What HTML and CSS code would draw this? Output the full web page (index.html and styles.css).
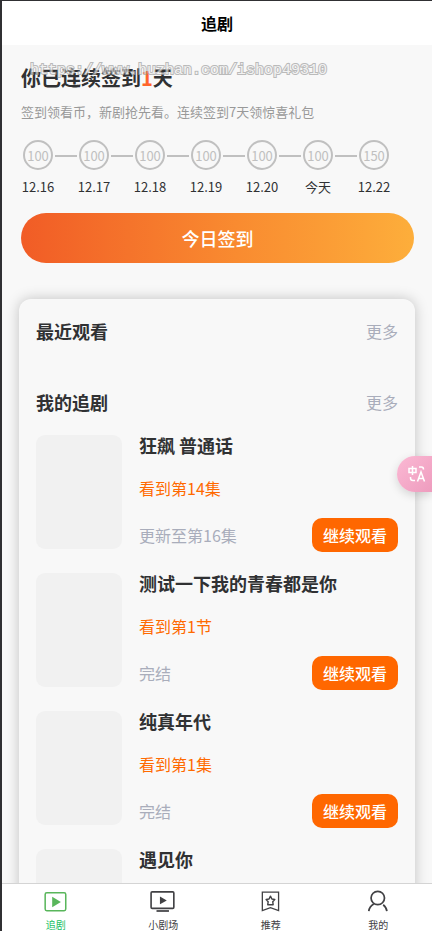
FILE: index.html
```html
<!DOCTYPE html>
<html lang="zh-CN">
<head>
<meta charset="utf-8">
<meta name="viewport" content="width=device-width, initial-scale=1">
<title>追剧</title>
<link rel="stylesheet" href="styles.css">
</head>
<body>
<div class="app">
  <header class="header"><h1 class="header-title">追剧</h1></header>
  <main class="content">
    <section class="checkin">
      <h2 class="checkin-title">你已连续签到<span class="count">1</span>天</h2>
      <div class="watermark">https://www.huzhan.com/ishop49310</div>
      <p class="checkin-hint">签到领看币，新剧抢先看。连续签到7天领惊喜礼包</p>
      <ol class="days">
        <li class="day"><span class="coin">100</span><span class="date">12.16</span></li>
        <li class="day"><span class="coin">100</span><span class="date">12.17</span></li>
        <li class="day"><span class="coin">100</span><span class="date">12.18</span></li>
        <li class="day"><span class="coin">100</span><span class="date">12.19</span></li>
        <li class="day"><span class="coin">100</span><span class="date">12.20</span></li>
        <li class="day"><span class="coin">100</span><span class="date">今天</span></li>
        <li class="day"><span class="coin">150</span><span class="date">12.22</span></li>
      </ol>
      <button class="checkin-button" type="button">今日签到</button>
    </section>
    <section class="card">
      <div class="section-head"><h2 class="section-title">最近观看</h2><a class="more" href="#recent">更多</a></div>
      <div class="section-head"><h2 class="section-title">我的追剧</h2><a class="more" href="#mine">更多</a></div>
      <ul class="shows">
        <li class="show">
          <div class="cover"></div>
          <div class="info">
            <h3 class="name">狂飙 普通话</h3>
            <p class="progress">看到第14集</p>
            <div class="row"><span class="status">更新至第16集</span><button class="resume" type="button">继续观看</button></div>
          </div>
        </li>
        <li class="show">
          <div class="cover"></div>
          <div class="info">
            <h3 class="name">测试一下我的青春都是你</h3>
            <p class="progress">看到第1节</p>
            <div class="row"><span class="status">完结</span><button class="resume" type="button">继续观看</button></div>
          </div>
        </li>
        <li class="show">
          <div class="cover"></div>
          <div class="info">
            <h3 class="name">纯真年代</h3>
            <p class="progress">看到第1集</p>
            <div class="row"><span class="status">完结</span><button class="resume" type="button">继续观看</button></div>
          </div>
        </li>
        <li class="show">
          <div class="cover"></div>
          <div class="info"><h3 class="name">遇见你</h3></div>
        </li>
      </ul>
    </section>
  </main>
  <nav class="tabs">
    <a class="tab active" href="#follow">
      <svg class="icon" viewBox="0 0 24 24" fill="none" stroke="currentColor"><rect x="2" y="3.500" width="19" height="16.500" rx="1.500" stroke-width="1.400"/><path d="M8.500 7.200v9.600l8-4.800z" fill="currentColor" stroke="none"/></svg>
      <span>追剧</span>
    </a>
    <a class="tab" href="#theater">
      <svg class="icon" viewBox="0 0 24 24" fill="none" stroke="currentColor"><rect x="1" y="2.700" width="21" height="15.200" rx="1" stroke-width="1.500"/><path d="M9.200 7v7l6.300-3.500z" fill="currentColor" stroke="none"/><path d="M6 20.300h11.500" stroke-width="1.600"/></svg>
      <span>小剧场</span>
    </a>
    <a class="tab" href="#recommend">
      <svg class="icon" viewBox="0 0 24 24" fill="none" stroke="currentColor"><path d="M4 2.800h15v17.200l-7.500-2.800L4 20z" stroke-width="1.200"/><path d="M11.500 6.600l1.300 2.600 2.700.5-1.900 2 .4 2.800H9l.4-2.800-1.900-2 2.700-.5z" stroke-width="1.300" stroke-linejoin="round"/></svg>
      <span>推荐</span>
    </a>
    <a class="tab" href="#profile">
      <svg class="icon" viewBox="0 0 24 24" fill="none" stroke="currentColor" stroke-width="1.600"><circle cx="11.800" cy="8.300" r="6.200"/><path d="M3.500 20.500c.4-3 2-5.200 4.600-6.600M20.200 20.500c-.3-2.500-1.500-4.500-3.400-6"/></svg>
      <span>我的</span>
    </a>
  </nav>
  <button class="translate" type="button" aria-label="翻译">
    <svg class="translate-icon" viewBox="0 0 20 20" fill="none" stroke="currentColor" stroke-width="1.500"><path d="M2 4.500h7v4H2zM5.500 2v9M12 3h2.500q2 0 2 2.500M3.500 13v1q0 2.500 2.500 2.500h2"/><path d="M10.500 17.500l3.500-9.500 3.500 9.500M11.700 14.500h4.600"/></svg>
  </button>
</div>
</body>
</html>
```

FILE: styles.css
```css
* {
  box-sizing: border-box;
  margin: 0;
  padding: 0;
}

body {
  font-family: "Noto Sans CJK SC", sans-serif;
  color: #303133;
  background: #f8f8f8;
}

button {
  border: 0;
  font: inherit;
  color: #fff;
}

a {
  text-decoration: none;
}

ol, ul {
  list-style: none;
}

.app {
  position: relative;
  display: flex;
  flex-direction: column;
  height: 100vh;
  border-top: 1px solid #303033;
  border-left: 2px solid #303033;
}

.header {
  flex: none;
  display: flex;
  align-items: center;
  justify-content: center;
  height: 44px;
  background: #fff;
}

.header-title {
  font-size: 16px;
  line-height: 24px;
  color: #000;
}

.content {
  flex: 1;
  min-height: 0;
  overflow: hidden;
}

.checkin {
  position: relative;
  padding: 18px 18px 36px 19px;
}

.checkin-title {
  font-size: 20px;
  line-height: 30px;
}

.count {
  color: #ff652b;
}

.watermark {
  position: absolute;
  top: 16px;
  left: 28px;
  font-family: "Liberation Mono", monospace;
  font-size: 15px;
  line-height: 20px;
  color: #f0f0f0;
  -webkit-text-stroke: 2px #a0a0a0;
  paint-order: stroke fill;
  opacity: 0.7;
}

.checkin-hint {
  margin-top: 8px;
  font-size: 13px;
  line-height: 22px;
  color: #999;
}

.days {
  display: flex;
  margin-top: 17px;
}

.day {
  position: relative;
  display: flex;
  flex-direction: column;
  align-items: center;
  gap: 7px;
  width: 34px;
  margin-right: 22px;
}

.day:last-child {
  margin-right: 0;
}

.day:not(:last-child)::after {
  content: "";
  position: absolute;
  top: 15px;
  left: 100%;
  width: 22px;
  height: 2px;
  background: #c0c0c0;
}

.coin {
  display: flex;
  align-items: center;
  justify-content: center;
  width: 30px;
  height: 30px;
  padding-top: 2px;
  border: 2px solid #c0c0c0;
  border-radius: 50%;
  font-size: 13px;
  line-height: 20px;
  color: #c0c0c0;
}

.date {
  font-size: 13px;
  line-height: 20px;
  white-space: nowrap;
}

.checkin-button {
  display: block;
  width: 100%;
  height: 50px;
  margin-top: 16px;
  border-radius: 25px;
  background: linear-gradient(90deg, #f15c26, #f98b30 55%, #fdae3b);
  font-size: 18px;
  font-weight: 500;
}

.card {
  margin: 0 17px;
  padding: 17px;
  border-radius: 12px;
  box-shadow: 0 0 14px #00000038;
}

.section-head {
  display: flex;
  align-items: center;
  justify-content: space-between;
  height: 30px;
  margin-bottom: 41px;
}

.section-head + .section-head {
  margin-bottom: 18px;
}

.section-title,
.name {
  font-size: 18px;
  line-height: 26px;
}

.name {
  line-height: 20px;
}

.more {
  font-size: 16px;
  line-height: 24px;
  color: #a9adbb;
}

.shows {
  display: grid;
  gap: 24px;
}

.show {
  display: flex;
  gap: 17px;
  height: 114px;
}

.cover {
  flex: none;
  width: 86px;
  border-radius: 9px;
  background: #f1f1f1;
}

.info {
  flex: 1;
  display: flex;
  flex-direction: column;
}

.progress {
  margin-top: 21px;
  font-size: 16px;
  line-height: 24px;
  color: #ff6a00;
}

.row {
  display: flex;
  align-items: center;
  justify-content: space-between;
  margin-top: 18px;
}

.status {
  font-size: 16px;
  line-height: 24px;
  color: #a9adbb;
}

.resume {
  width: 86px;
  height: 34px;
  border-radius: 10px;
  background: #ff6700;
  font-size: 16px;
  font-weight: 500;
}

.tabs {
  position: relative;
  flex: none;
  display: flex;
  height: 48px;
  border-top: 1px solid #d4d4d4;
  background: #fff;
}

.tab {
  flex: 1;
  display: flex;
  flex-direction: column;
  align-items: center;
  padding-top: 5px;
  font-size: 10px;
  line-height: 14px;
  gap: 3px;
  color: #414144;
}

.tab.active {
  color: #20bf66;
}

.icon {
  flex: none;
  width: 26px;
  height: 26px;
}

.tab.active .icon {
  color: #59b65b;
}

.translate {
  position: absolute;
  top: 455px;
  right: 0;
  display: flex;
  align-items: center;
  width: 35px;
  height: 36px;
  padding-left: 10px;
  border-radius: 18px 0 0 18px;
  background: linear-gradient(135deg, #fbb9d4, #ee9cbe);
  box-shadow: 0 3px 10px #00000026;
}

.translate-icon {
  width: 20px;
  height: 20px;
}
```
